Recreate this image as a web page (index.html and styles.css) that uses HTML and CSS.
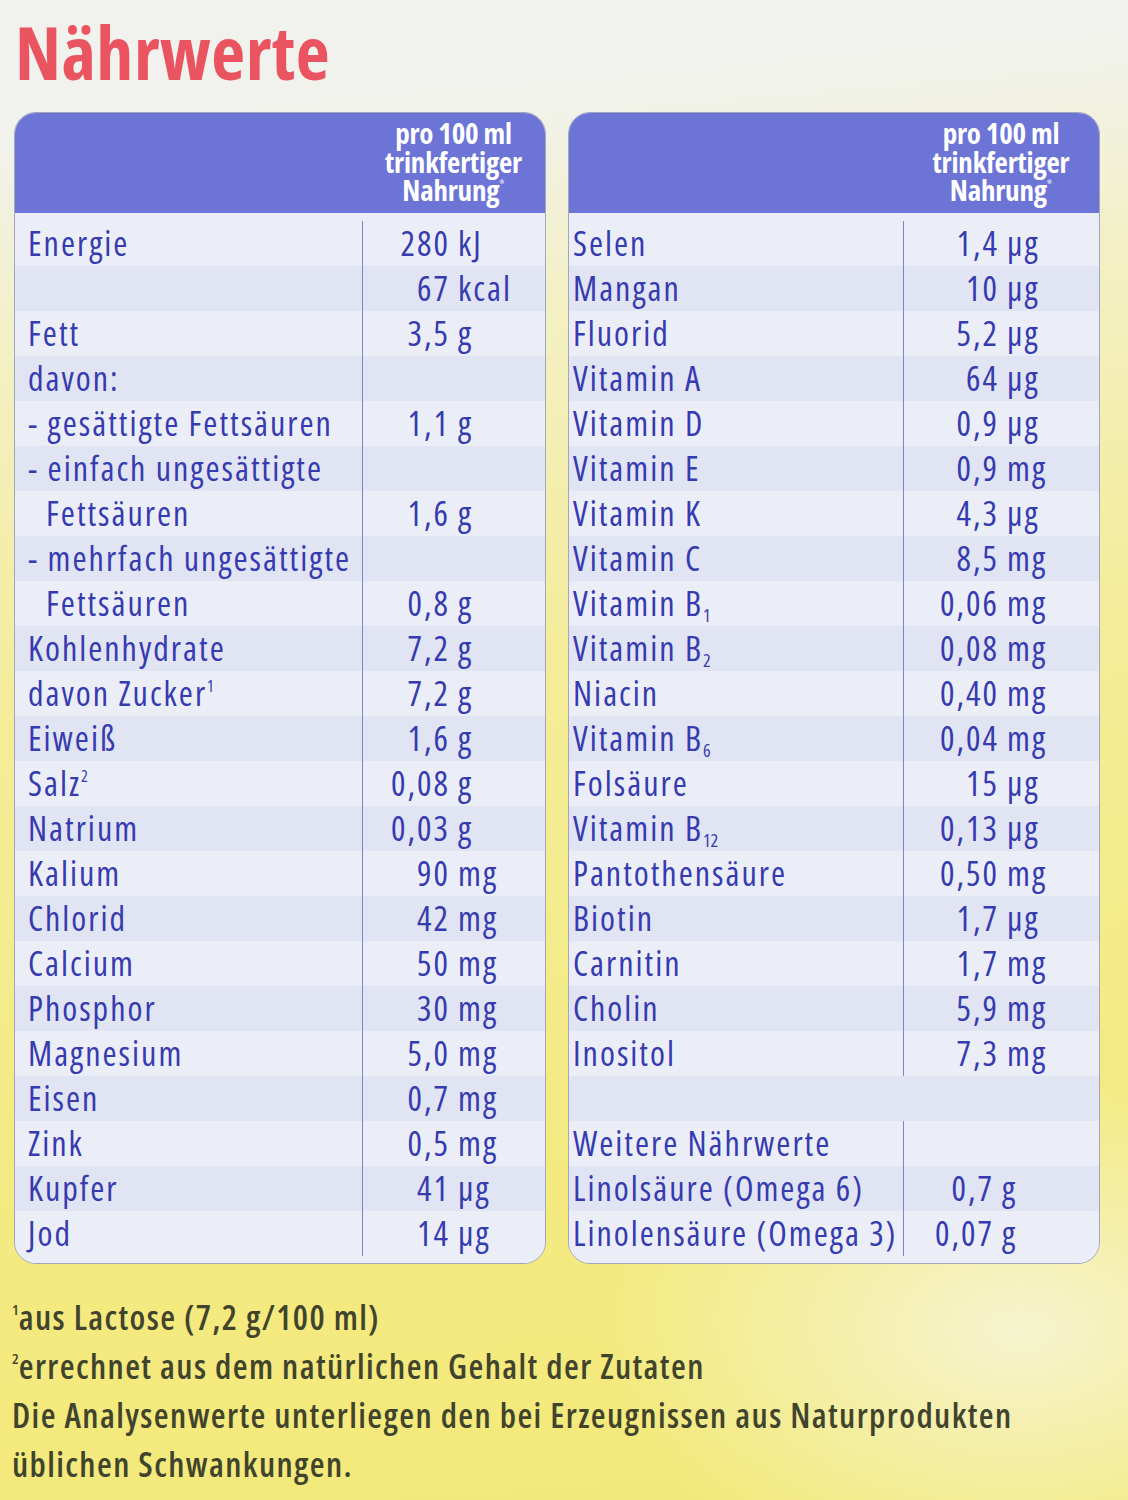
FILE: index.html
```html
<!DOCTYPE html>
<html lang="de">
<head>
<meta charset="utf-8">
<title>Nährwerte</title>
<link rel="stylesheet" href="styles.css">
</head>
<body>
<div class="page">
  <h1 class="title">Nährwerte</h1>
  <div class="panels">
    <section class="panel panel-left">
      <div class="head">
        <div></div>
        <div class="head-val">pro 100 ml<br>trinkfertiger<br>Nahrung<sup>*</sup></div>
      </div>
      <div class="rows">
        <div class="row"><span class="lbl">Energie</span><span class="val"><span class="num">280</span><span class="unit">kJ</span></span></div>
        <div class="row"><span class="lbl"></span><span class="val"><span class="num">67</span><span class="unit">kcal</span></span></div>
        <div class="row"><span class="lbl">Fett</span><span class="val"><span class="num">3,5</span><span class="unit">g</span></span></div>
        <div class="row"><span class="lbl">davon:</span><span class="val"></span></div>
        <div class="row"><span class="lbl">- gesättigte Fettsäuren</span><span class="val"><span class="num">1,1</span><span class="unit">g</span></span></div>
        <div class="row"><span class="lbl">- einfach ungesättigte</span><span class="val"></span></div>
        <div class="row"><span class="lbl indent">Fettsäuren</span><span class="val"><span class="num">1,6</span><span class="unit">g</span></span></div>
        <div class="row"><span class="lbl">- mehrfach ungesättigte</span><span class="val"></span></div>
        <div class="row"><span class="lbl indent">Fettsäuren</span><span class="val"><span class="num">0,8</span><span class="unit">g</span></span></div>
        <div class="row"><span class="lbl">Kohlenhydrate</span><span class="val"><span class="num">7,2</span><span class="unit">g</span></span></div>
        <div class="row"><span class="lbl">davon Zucker<sup>1</sup></span><span class="val"><span class="num">7,2</span><span class="unit">g</span></span></div>
        <div class="row"><span class="lbl">Eiweiß</span><span class="val"><span class="num">1,6</span><span class="unit">g</span></span></div>
        <div class="row"><span class="lbl">Salz<sup>2</sup></span><span class="val"><span class="num">0,08</span><span class="unit">g</span></span></div>
        <div class="row"><span class="lbl">Natrium</span><span class="val"><span class="num">0,03</span><span class="unit">g</span></span></div>
        <div class="row"><span class="lbl">Kalium</span><span class="val"><span class="num">90</span><span class="unit">mg</span></span></div>
        <div class="row"><span class="lbl">Chlorid</span><span class="val"><span class="num">42</span><span class="unit">mg</span></span></div>
        <div class="row"><span class="lbl">Calcium</span><span class="val"><span class="num">50</span><span class="unit">mg</span></span></div>
        <div class="row"><span class="lbl">Phosphor</span><span class="val"><span class="num">30</span><span class="unit">mg</span></span></div>
        <div class="row"><span class="lbl">Magnesium</span><span class="val"><span class="num">5,0</span><span class="unit">mg</span></span></div>
        <div class="row"><span class="lbl">Eisen</span><span class="val"><span class="num">0,7</span><span class="unit">mg</span></span></div>
        <div class="row"><span class="lbl">Zink</span><span class="val"><span class="num">0,5</span><span class="unit">mg</span></span></div>
        <div class="row"><span class="lbl">Kupfer</span><span class="val"><span class="num">41</span><span class="unit">µg</span></span></div>
        <div class="row"><span class="lbl">Jod</span><span class="val"><span class="num">14</span><span class="unit">µg</span></span></div>
      </div>
    </section>
    <section class="panel panel-right">
      <div class="head">
        <div></div>
        <div class="head-val">pro 100 ml<br>trinkfertiger<br>Nahrung<sup>*</sup></div>
      </div>
      <div class="rows">
        <div class="row"><span class="lbl">Selen</span><span class="val"><span class="num">1,4</span><span class="unit">µg</span></span></div>
        <div class="row"><span class="lbl">Mangan</span><span class="val"><span class="num">10</span><span class="unit">µg</span></span></div>
        <div class="row"><span class="lbl">Fluorid</span><span class="val"><span class="num">5,2</span><span class="unit">µg</span></span></div>
        <div class="row"><span class="lbl">Vitamin A</span><span class="val"><span class="num">64</span><span class="unit">µg</span></span></div>
        <div class="row"><span class="lbl">Vitamin D</span><span class="val"><span class="num">0,9</span><span class="unit">µg</span></span></div>
        <div class="row"><span class="lbl">Vitamin E</span><span class="val"><span class="num">0,9</span><span class="unit">mg</span></span></div>
        <div class="row"><span class="lbl">Vitamin K</span><span class="val"><span class="num">4,3</span><span class="unit">µg</span></span></div>
        <div class="row"><span class="lbl">Vitamin C</span><span class="val"><span class="num">8,5</span><span class="unit">mg</span></span></div>
        <div class="row"><span class="lbl">Vitamin B<sub>1</sub></span><span class="val"><span class="num">0,06</span><span class="unit">mg</span></span></div>
        <div class="row"><span class="lbl">Vitamin B<sub>2</sub></span><span class="val"><span class="num">0,08</span><span class="unit">mg</span></span></div>
        <div class="row"><span class="lbl">Niacin</span><span class="val"><span class="num">0,40</span><span class="unit">mg</span></span></div>
        <div class="row"><span class="lbl">Vitamin B<sub>6</sub></span><span class="val"><span class="num">0,04</span><span class="unit">mg</span></span></div>
        <div class="row"><span class="lbl">Folsäure</span><span class="val"><span class="num">15</span><span class="unit">µg</span></span></div>
        <div class="row"><span class="lbl">Vitamin B<sub>12</sub></span><span class="val"><span class="num">0,13</span><span class="unit">µg</span></span></div>
        <div class="row"><span class="lbl">Pantothensäure</span><span class="val"><span class="num">0,50</span><span class="unit">mg</span></span></div>
        <div class="row"><span class="lbl">Biotin</span><span class="val"><span class="num">1,7</span><span class="unit">µg</span></span></div>
        <div class="row"><span class="lbl">Carnitin</span><span class="val"><span class="num">1,7</span><span class="unit">mg</span></span></div>
        <div class="row"><span class="lbl">Cholin</span><span class="val"><span class="num">5,9</span><span class="unit">mg</span></span></div>
        <div class="row"><span class="lbl">Inositol</span><span class="val"><span class="num">7,3</span><span class="unit">mg</span></span></div>
        <div class="row row-gap"><span class="lbl"></span><span class="val"></span></div>
        <div class="row"><span class="lbl">Weitere Nährwerte</span><span class="val"></span></div>
        <div class="row"><span class="lbl">Linolsäure (Omega 6)</span><span class="val val-short"><span class="num">0,7</span><span class="unit">g</span></span></div>
        <div class="row"><span class="lbl">Linolensäure (Omega 3)</span><span class="val val-short"><span class="num">0,07</span><span class="unit">g</span></span></div>
      </div>
    </section>
  </div>
  <div class="notes">
    <p><sup>1</sup>aus Lactose (7,2 g/100 ml)</p>
    <p><sup>2</sup>errechnet aus dem natürlichen Gehalt der Zutaten</p>
    <p>Die Analysenwerte unterliegen den bei Erzeugnissen aus Naturprodukten</p>
    <p>üblichen Schwankungen.</p>
  </div>
</div>
</body>
</html>
```

FILE: styles.css
```css
* { box-sizing: border-box; }

html, body {
  margin: 0;
  padding: 0;
}

body {
  width: 1128px;
  min-height: 1500px;
  font-family: "Open Sans", "DejaVu Sans Condensed", sans-serif;
  font-stretch: 75%;
  background:
    radial-gradient(ellipse 420px 260px at 1020px 1330px, rgba(246, 245, 215, 0.9), rgba(246, 245, 215, 0) 100%),
    linear-gradient(175deg, #f1f2ee 0%, #f1f2ec 9%, #f3f0c4 22%, #f4ec98 45%, #f4ea82 75%, #f3e97a 100%);
}

.page {
  padding: 15px 0 0 0;
}

.title {
  margin: 0 0 23px 15px;
  font-size: 74px;
  line-height: 74px;
  height: 74px;
  font-weight: bold;
  letter-spacing: 0.5px;
  color: #ea5460;
}

.panels {
  display: flex;
  gap: 22px;
  padding-left: 14px;
}

.panel {
  width: 532px;
  border: 1px solid #a2a6bd;
  border-radius: 22px;
  overflow: hidden;
  background: #eaecf6;
  color: #363bb0;
}

.head {
  display: grid;
  height: 100px;
  background: #6c74d6;
  color: #ffffff;
}

.panel-left .head,
.panel-left .row { grid-template-columns: 347px 1fr; }

.panel-right .head,
.panel-right .row { grid-template-columns: 334px 1fr; }

.head-val {
  text-align: center;
  font-weight: bold;
  font-size: 29px;
  line-height: 28.5px;
  padding-top: 6px;
  letter-spacing: -0.2px;
}

.head-val sup {
  font-size: 12px;
  vertical-align: 12px;
  line-height: 0;
  color: #c8cbf0;
}

.rows {
  padding: 8px 0 7px;
  background: #eceef7;
}

.row {
  display: grid;
  height: 45px;
  align-items: center;
  font-size: 34px;
  letter-spacing: 2px;
  line-height: 45px;
}

.row:nth-child(even) { background: #e1e4f2; }

.lbl {
  white-space: nowrap;
  height: 45px;
}

.panel-left .lbl { padding-left: 13px; }
.panel-right .lbl { padding-left: 4px; }

.lbl.indent { padding-left: 31px; }

.val {
  display: flex;
  height: 45px;
  border-left: 1.5px solid #7d85c8;
}

.row-gap .val { border-left-color: transparent; }

.num {
  text-align: right;
}

.panel-left .num { width: 87px; }
.panel-right .num { width: 95px; }
.panel-right .val-short .num { width: 90px; }

.unit {
  margin-left: 8px;
}

sup {
  font-size: 16px;
  line-height: 0;
  vertical-align: 14px;
  letter-spacing: 0;
}

sub {
  font-size: 18px;
  line-height: 0;
  vertical-align: -6px;
  letter-spacing: 0;
}

.notes {
  margin-top: 29px;
  padding-left: 12px;
  color: #41442c;
  font-size: 34px;
  font-weight: 600;
  letter-spacing: 1.4px;
  line-height: 49px;
}

.notes p { margin: 0; }

.notes sup {
  font-size: 15px;
  vertical-align: 15px;
}
```
